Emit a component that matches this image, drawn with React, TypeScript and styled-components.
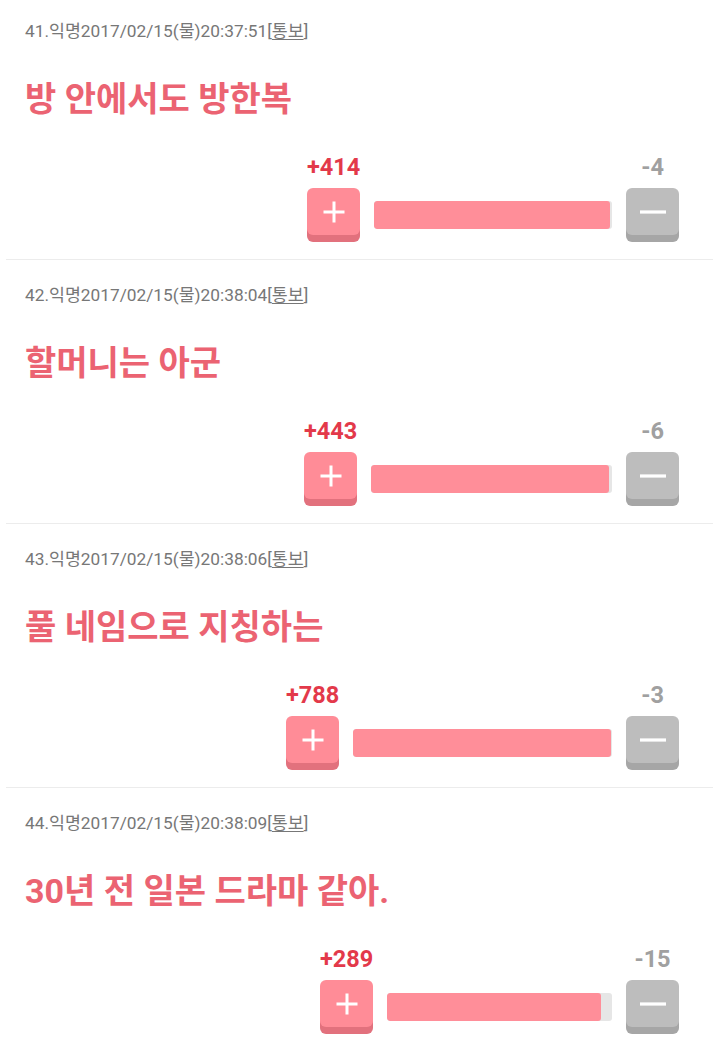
import React from 'react';
import styled, { createGlobalStyle } from 'styled-components';

const GlobalStyle = createGlobalStyle`
  html, body {
    margin: 0;
    padding: 0;
    background: #ffffff;
  }
  body {
    font-family: Roboto, 'Noto Sans CJK KR', sans-serif;
  }
`;

const List = styled.div`
  width: 720px;
  padding: 0 7px 0 6px;
  box-sizing: border-box;
`;

const PostBox = styled.div`
  padding: 25px 34px 17px 19px;
  border-bottom: 1px solid #ececec;

  &:first-child {
    padding-top: 21px;
  }
`;

const MetaLine = styled.div`
  font-size: 17.3px;
  line-height: 20px;
  color: #777777;
  white-space: nowrap;
`;

const ReportLink = styled.a`
  color: inherit;
  text-decoration: underline;
  text-underline-offset: 2px;
`;

const Title = styled.h2`
  margin: 40px 0 0 0;
  font-size: 34px;
  line-height: 36px;
  font-weight: 700;
  color: #eb6372;
  white-space: nowrap;
`;

const VoteRow = styled.div`
  display: flex;
  justify-content: flex-end;
  align-items: flex-end;
  gap: 14px;
  margin-top: 37px;
`;

const VoteCol = styled.div`
  display: flex;
  flex-direction: column;
  align-items: center;
  width: 53px;
`;

const VoteCount = styled.div<{ $up?: boolean }>`
  font-size: 23.5px;
  line-height: 26px;
  font-weight: 700;
  color: ${({ $up }) => ($up ? '#e3394a' : '#a0a0a0')};
  white-space: nowrap;
  margin-bottom: 8px;
`;

const VoteButton = styled.button<{ $up?: boolean }>`
  width: 53px;
  height: 47px;
  padding: 0;
  border: none;
  border-radius: 6px;
  box-shadow: 0 7px 0 ${({ $up }) => ($up ? '#e2717d' : '#a6a6a6')};
  background: ${({ $up }) => ($up ? '#ff8c97' : '#bdbdbd')};
  margin-bottom: 7px;
  display: flex;
  align-items: center;
  justify-content: center;
  cursor: pointer;
`;

const BarTrack = styled.div<{ $width: number }>`
  width: ${({ $width }) => $width}px;
  height: 28px;
  border-radius: 3px;
  background: #e6e6e6;
  margin-bottom: 13px;
  overflow: hidden;
`;

const BarFill = styled.div`
  height: 100%;
  background: #ff8e99;
  border-radius: 3px;
`;

const PlusIcon = () => (
  <svg width="24" height="24" viewBox="0 0 24 24">
    <path d="M12 1.5v21M1.5 12h21" stroke="#ffffff" strokeWidth="3" fill="none" />
  </svg>
);

const MinusIcon = () => (
  <svg width="28" height="24" viewBox="0 0 28 24">
    <path d="M1 12h26" stroke="#ffffff" strokeWidth="3.2" fill="none" />
  </svg>
);

interface Post {
  no: number;
  time: string;
  title: string;
  up: number;
  down: number;
  barWidth: number;
}

const posts: Post[] = [
  { no: 41, time: '20:37:51', title: '방 안에서도 방한복', up: 414, down: 4, barWidth: 238 },
  { no: 42, time: '20:38:04', title: '할머니는 아군', up: 443, down: 6, barWidth: 241 },
  { no: 43, time: '20:38:06', title: '풀 네임으로 지칭하는', up: 788, down: 3, barWidth: 259 },
  { no: 44, time: '20:38:09', title: '30년 전 일본 드라마 같아.', up: 289, down: 15, barWidth: 225 },
];

const VoteBar = ({ up, down, barWidth }: { up: number; down: number; barWidth: number }) => {
  const ratio = (up / (up + down)) * 100;
  return (
    <VoteRow>
      <VoteCol>
        <VoteCount $up>+{up}</VoteCount>
        <VoteButton $up aria-label="추천">
          <PlusIcon />
        </VoteButton>
      </VoteCol>
      <BarTrack $width={barWidth}>
        <BarFill style={{ width: `${ratio}%` }} />
      </BarTrack>
      <VoteCol>
        <VoteCount>-{down}</VoteCount>
        <VoteButton aria-label="반대">
          <MinusIcon />
        </VoteButton>
      </VoteCol>
    </VoteRow>
  );
};

const PostItem = ({ post }: { post: Post }) => (
  <PostBox>
    <MetaLine>
      {post.no}.익명2017/02/15(물){post.time}[<ReportLink href="#">통보</ReportLink>]
    </MetaLine>
    <Title>{post.title}</Title>
    <VoteBar up={post.up} down={post.down} barWidth={post.barWidth} />
  </PostBox>
);

const App = () => (
  <>
    <GlobalStyle />
    <List>
      {posts.map((p) => (
        <PostItem key={p.no} post={p} />
      ))}
    </List>
  </>
);

export default App;
